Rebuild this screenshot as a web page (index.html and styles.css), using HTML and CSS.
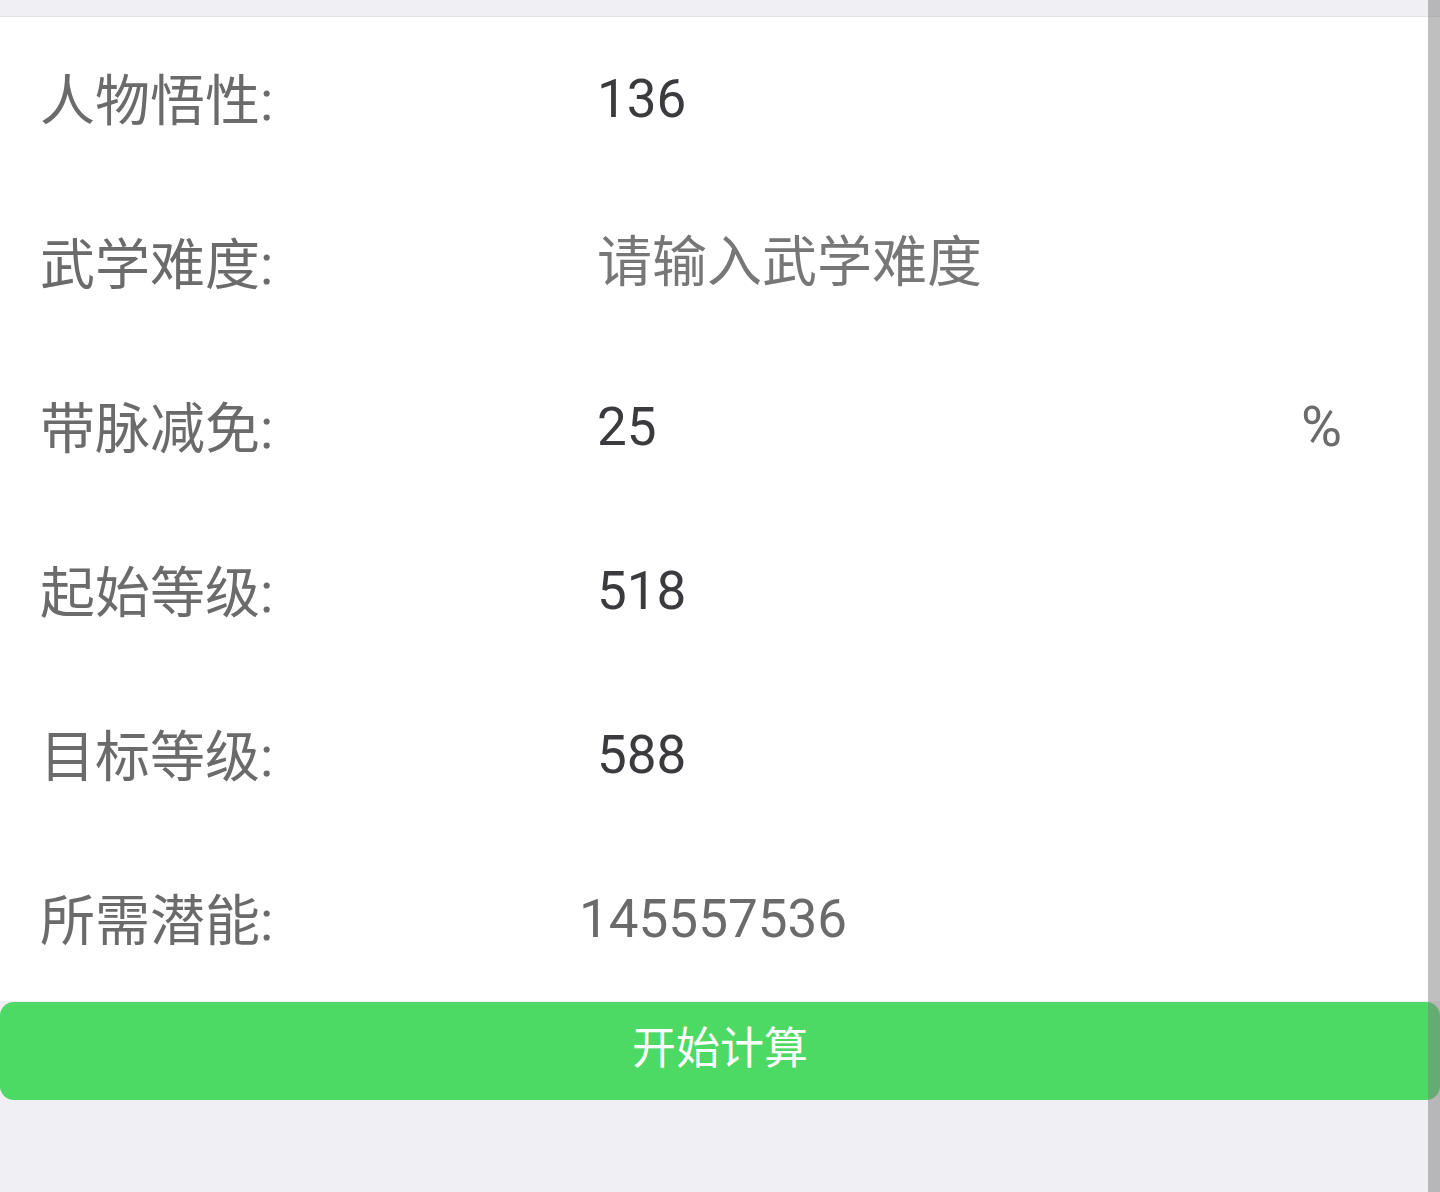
FILE: index.html
```html
<!DOCTYPE html>
<html lang="zh-CN">

<head>
  <meta charset="UTF-8">
  <meta name="viewport" content="width=device-width, initial-scale=1.0">
  <title>潜能计算</title>
  <link rel="stylesheet" href="styles.css">
</head>

<body>

  <!-- top strip -->
  <div class="topbar"></div>

  <!-- form -->
  <div class="form">
    <div class="row">
      <label class="row-label">人物悟性:</label>
      <input class="row-input" type="number" value="136">
    </div>
    <div class="row">
      <label class="row-label">武学难度:</label>
      <input class="row-input" type="number" placeholder="请输入武学难度">
    </div>
    <div class="row">
      <label class="row-label">带脉减免:</label>
      <input class="row-input" type="number" value="25">
      <span class="row-unit">%</span>
    </div>
    <div class="row">
      <label class="row-label">起始等级:</label>
      <input class="row-input" type="number" value="518">
    </div>
    <div class="row">
      <label class="row-label">目标等级:</label>
      <input class="row-input" type="number" value="588">
    </div>
    <div class="row">
      <label class="row-label">所需潜能:</label>
      <span class="row-result" id="result">145557536</span>
    </div>
  </div>

  <button class="btn-calc" id="calcBtn">开始计算</button>

  <!-- overlay scrollbar -->
  <div class="scroll-thumb"></div>

</body>

</html>
```

FILE: styles.css
```css
html,
body {
  margin: 0;
  padding: 0;
}

body {
  background: #efeff4;
  font-family: Roboto, "Noto Sans CJK SC", sans-serif;
  height: 1192px;
  overflow: hidden;
}

/* Top strip */
.topbar {
  height: 16px;
  background: #efeff4;
  border-bottom: 1px solid #e2e2e6;
}

/* Form */
.form {
  background: #fff;
}

.row {
  display: flex;
  align-items: center;
  height: 164px;
  padding: 0 40px;
}

.row-label {
  width: 557px;
  flex-shrink: 0;
  padding-bottom: 6px;
  font-size: 55px;
  color: #6b6b6b;
}

.row-input {
  flex: 1;
  min-width: 0;
  border: none;
  outline: none;
  background: transparent;
  padding: 0;
  font-family: Roboto, "Noto Sans CJK SC", sans-serif;
  font-size: 53px;
  color: #3a3a3f;
  -moz-appearance: textfield;
}

.row-input::-webkit-outer-spin-button,
.row-input::-webkit-inner-spin-button {
  -webkit-appearance: none;
  margin: 0;
}

.row-input::placeholder {
  color: #777;
  font-size: 55px;
}

.row-unit {
  font-size: 56px;
  color: #6b6b6b;
  margin-right: 58px;
}

.row-result {
  margin-left: -18px;
  font-size: 53px;
  color: #6b6b6b;
}

/* Button */
.btn-calc {
  display: block;
  width: 100%;
  height: 98px;
  margin-top: 1px;
  padding: 0 0 12px;
  border: none;
  border-radius: 14px;
  background: #4cd964;
  color: #fff;
  font-family: "Noto Sans CJK SC", sans-serif;
  font-size: 44px;
  cursor: pointer;
}

.scroll-thumb {
  position: fixed;
  top: 0;
  right: 0;
  width: 12px;
  height: 100%;
  background: rgba(128, 128, 128, 0.5);
}
```
